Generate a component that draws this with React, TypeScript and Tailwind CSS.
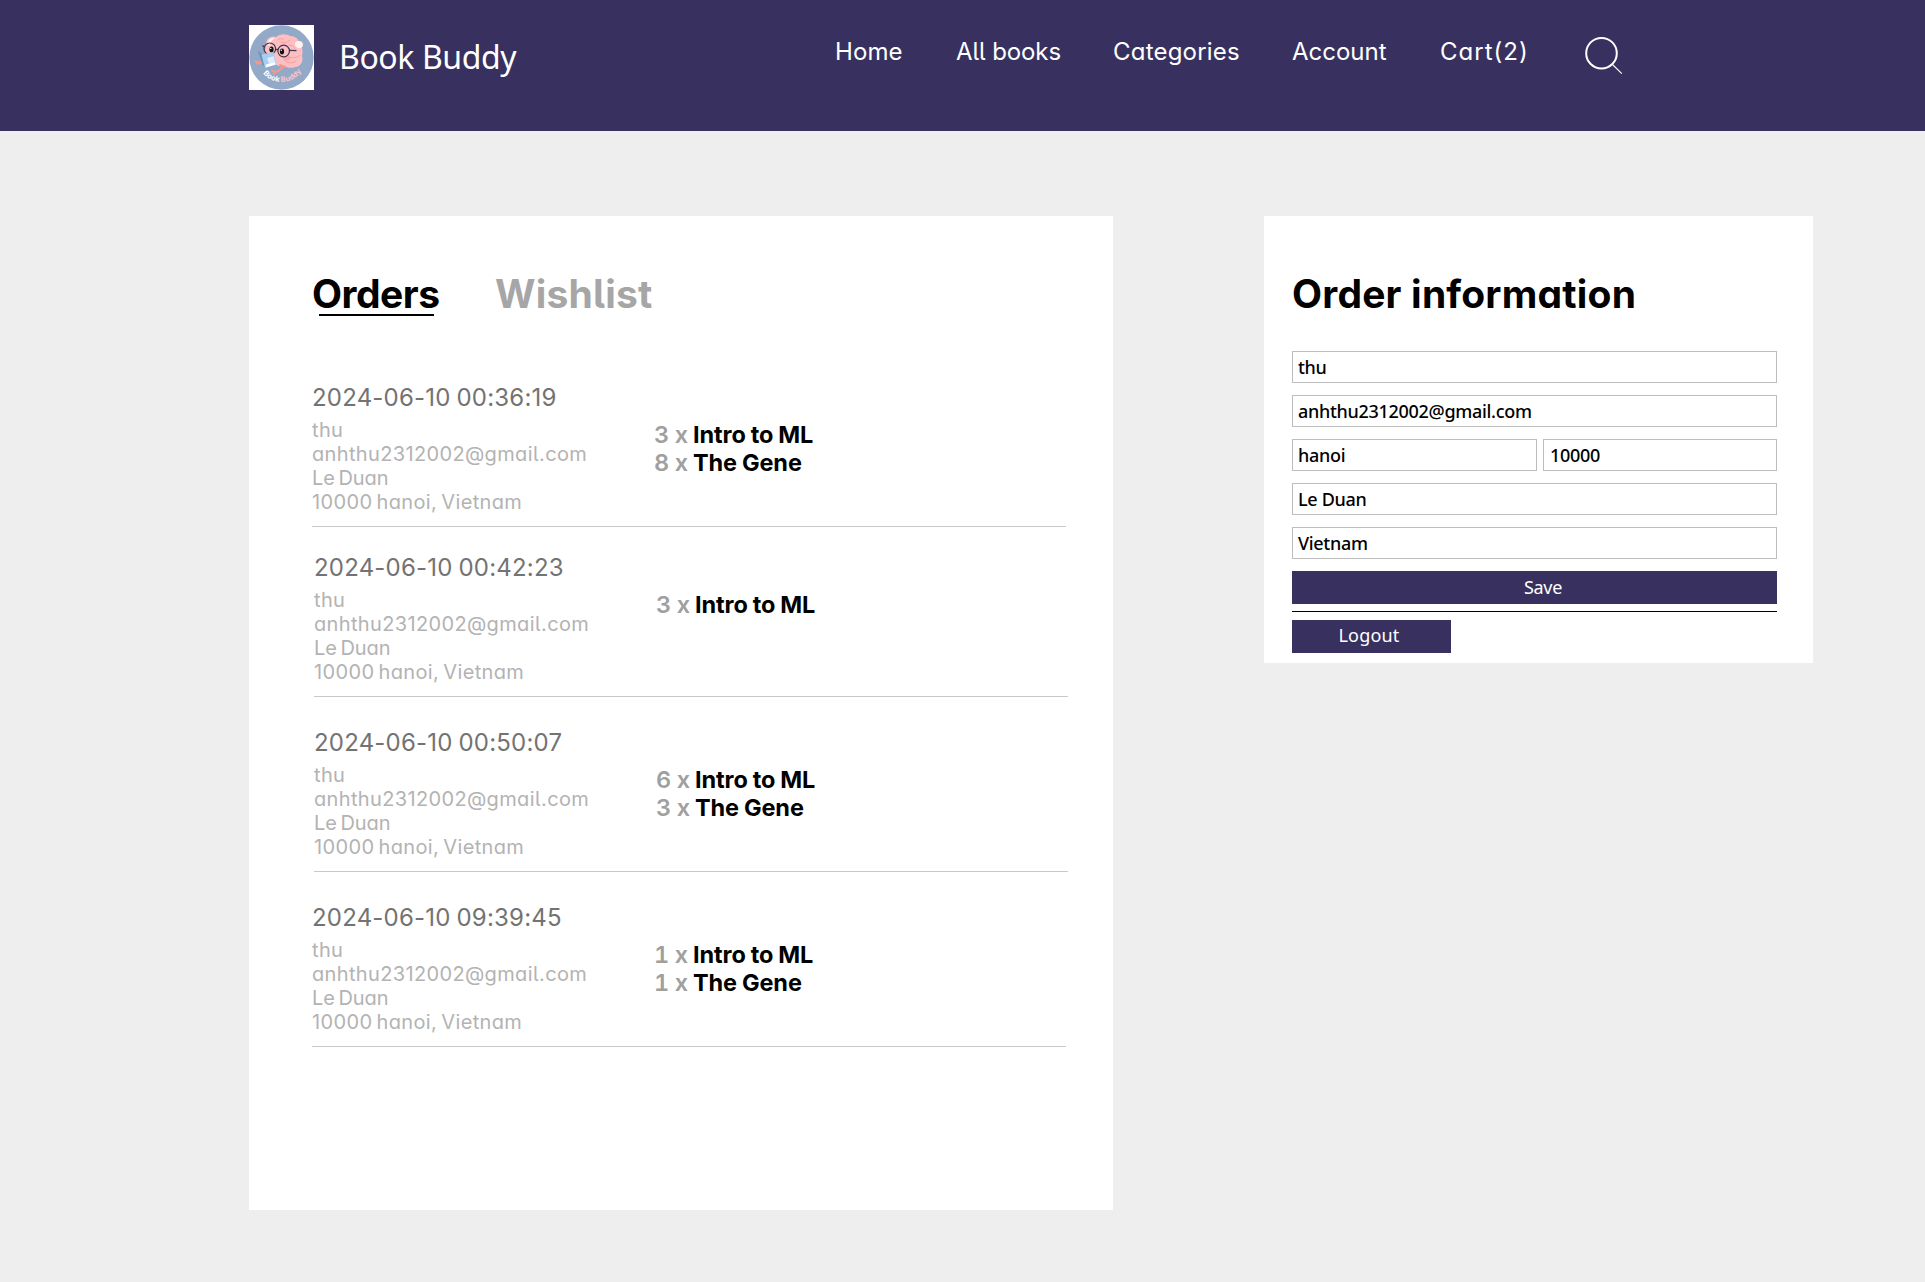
const alt = "[font-family:Inter,sans-serif] [font-feature-settings:'cv11','cv05']";

function Logo() {
  return (
    <svg viewBox="0 0 65 65" className="mt-[25px] size-[65px] shrink-0 bg-white">
      <defs>
        <path id="ring" d="M8.5 33 A24 24 0 0 0 56.5 33" />
      </defs>
      <circle cx="32.5" cy="32.5" r="32.2" fill="#93a9c8" />
      <path d="M17 21 C16 14 22 10 27 12 C31 8 38 9 41 11 C46 11 50 14 50 18 C54 22 54 27 53 31 C55 37 51 42 46 42 C42 44 37 42 35 41 C30 42 26 40 25 36 C18 36 14 29 17 21Z" fill="#fdbfc1" />
      <path d="M19 20 C18 15 22 12 26 13 C23 15 21 17 21 21Z M46 20 a4 3.6 0 1 1 5 3 C49 24 47 22 46 20Z" fill="#fff0ee" />
      <path d="M29 15 C31 13 33 13 35 15 M32 17 C35 19 38 17 41 15 M40 20 C43 20 46 22 46 24 M39 31 C43 34 48 33 51 30 M36 36 C40 39 45 38 47 36" fill="none" stroke="#f59a9c" strokeWidth="0.9" strokeLinecap="round" />
      <ellipse cx="37.5" cy="33.5" rx="3.6" ry="2" fill="#fb9a94" opacity="0.6" />
      <ellipse cx="22.5" cy="24.5" rx="2.1" ry="3" fill="#111" />
      <ellipse cx="33" cy="26.5" rx="2.1" ry="3" fill="#111" />
      <circle cx="21.8" cy="23.4" r="0.7" fill="#fff" />
      <circle cx="32.3" cy="25.3" r="0.7" fill="#fff" />
      <g fill="none" stroke="#3f3550" strokeWidth="1.2">
        <circle cx="20.8" cy="23.8" r="5.8" />
        <circle cx="34.7" cy="26" r="5.8" />
        <path d="M26.5 25 Q28 23.6 29.2 25 M40.4 25.4 L47.5 25.6 M15 22 L13.5 20.5" />
      </g>
      <path d="M13 35 C10 39 8 38 6.5 36 M13 38 L8 38.5 M26 47 C30 47 31 43 36 41.5 M26 47 L23 45.5 M26 47 L25 49 M31 40 L36 42" fill="none" stroke="#f9968c" strokeWidth="2" strokeLinecap="round" />
      <path d="M8.5 25.5 L13 29 L16 42 L13.5 40Z" fill="#6f95c2" />
      <path d="M12.5 29.5 L24.5 27 L28 39.5 L16 43Z" fill="#a9cdee" />
      <path d="M18 33 L24.5 31.3 L26 37 L20 38.8Z" fill="#dcecfa" />
      <path d="M17 39.5 L26 37 L26.8 39.4 L16.6 42.4Z" fill="#fff" />
      <text fontSize="7.4" fontWeight="700" fontFamily="Inter, sans-serif" letterSpacing="0.1">
        <textPath href="#ring" startOffset="16.5">
          <tspan fill="#ffffff">Book</tspan>
          <tspan fill="#fbc3cd" dx="2">Buddy</tspan>
        </textPath>
      </text>
    </svg>
  );
}

function Header() {
  return (
    <header className="flex h-[131px] items-start bg-[#383160] pl-[249px] text-white">
      <Logo />
      <div className="mt-[37px] ml-[25px] w-[496px] [font-family:'Noto_Sans',sans-serif] text-[32px] leading-[40px] tracking-[-0.4px]">Book Buddy</div>
      <nav className={`mt-[38px] flex text-[24px] leading-[28px] ${alt}`}>
        <a className="w-[121px] tracking-[0.1px]">Home</a>
        <a className="w-[157px] tracking-[-0.1px]">All books</a>
        <a className="w-[179px] tracking-[0.2px]">Categories</a>
        <a className="w-[148px]">Account</a>
        <a className="w-[144px] tracking-[1px]">Cart(2)</a>
      </nav>
      <svg viewBox="0 0 40 40" className="mt-[36px] size-[40px] shrink-0" fill="none" stroke="white">
        <circle cx="17.5" cy="17.2" r="15.3" strokeWidth="2" />
        <path d="M28.5 28.5 L37.8 37.6" strokeWidth="1.1" />
      </svg>
    </header>
  );
}

type Order = { date: string; items: [number, string][]; box: string };

const orders: Order[] = [
  { date: '2024-06-10 00:36:19', items: [[3, 'Intro to ML'], [8, 'The Gene']], box: '' },
  { date: '2024-06-10 00:42:23', items: [[3, 'Intro to ML']], box: 'mt-[27px] ml-[2px]' },
  { date: '2024-06-10 00:50:07', items: [[6, 'Intro to ML'], [3, 'The Gene']], box: 'mt-[32px] ml-[2px]' },
  { date: '2024-06-10 09:39:45', items: [[1, 'Intro to ML'], [1, 'The Gene']], box: 'mt-[32px]' },
];

function OrderRow({ order }: { order: Order }) {
  return (
    <article className={`w-[754px] border-b border-[#c9c9c9] pb-[11px] ${order.box}`}>
      <h3 className="text-[24px] leading-[28px] tracking-[0.2px] [word-spacing:-1px] text-[#737373]">{order.date}</h3>
      <div className="mt-[6px] mb-px flex">
        <div className="w-[342px] text-[20px] leading-[24px] tracking-[0.35px] [word-spacing:-1.8px] text-[#b3b3b3]">
          <p>thu</p>
          <p>anhthu2312002@gmail.com</p>
          <p className="tracking-[-0.1px]">Le Duan</p>
          <p>10000 hanoi, Vietnam</p>
        </div>
        <ul className="pt-[3px] text-[23.5px] leading-[28px] font-bold tracking-[-0.1px] [word-spacing:-0.5px] text-black">
          {order.items.map(([n, title]) => (
            <li key={title}>
              <span className="font-semibold tabular-nums text-[#a0a0a0]">
                <span className="inline-block w-[15px]">{n}</span> x
              </span>{' '}
              {title}
            </li>
          ))}
        </ul>
      </div>
    </article>
  );
}

const field = 'h-[32px] border border-[#bdbdbd] pl-[5px] leading-[30px]';

export default function App() {
  return (
    <div className="h-[1282px] w-[1925px] overflow-hidden bg-[#eeeeee]">
      <Header />
      <main className="mt-[85px] ml-[249px] flex items-start gap-[151px]">
        <section className={`h-[994px] w-[864px] bg-white pt-[54px] pl-[63px] ${alt}`}>
          <div className="flex text-[39px] leading-[48px] font-bold">
            <h2 className="w-[183px] tracking-[-0.5px] text-black">
              Orders
              <div className="mt-[-4px] ml-[7px] h-[2px] w-[115px] bg-black" />
            </h2>
            <h2 className="tracking-[0.2px] text-[#a6a6a6]">Wishlist</h2>
          </div>
          <div className="mt-[66px]">
            {orders.map((o) => (
              <OrderRow key={o.date} order={o} />
            ))}
          </div>
        </section>
        <section className="h-[447px] w-[549px] bg-white pt-[54px] pl-[28px]">
          <h2 className={`text-[39px] leading-[48px] font-bold tracking-[0.2px] text-black ${alt}`}>Order information</h2>
          <form className="mt-[33px] w-[485px] [font-family:'Noto_Sans',sans-serif] text-[18px] tracking-[-0.3px] text-black">
            <div className="flex flex-col gap-[12px] font-medium">
              <div className={field}>thu</div>
              <div className={field}>anhthu2312002@gmail.com</div>
              <div className="flex gap-[6px]">
                <div className={`w-[245px] ${field}`}>hanoi</div>
                <div className="h-[32px] w-[234px] border border-[#bdbdbd] pl-[6px] leading-[30px]">10000</div>
              </div>
              <div className={field}>Le Duan</div>
              <div className={field}>Vietnam</div>
            </div>
            <button type="button" className="mt-[12px] block h-[33px] w-full bg-[#383160] pl-[17px] text-center leading-[33px] text-white">Save</button>
            <div className="my-[7px] h-px bg-black" />
            <button type="button" className="mt-[8px] block h-[33px] w-[159px] bg-[#383160] pr-[5px] pb-[3px] text-center leading-[30px] tracking-[0.2px] text-white">Logout</button>
          </form>
        </section>
      </main>
    </div>
  );
}
